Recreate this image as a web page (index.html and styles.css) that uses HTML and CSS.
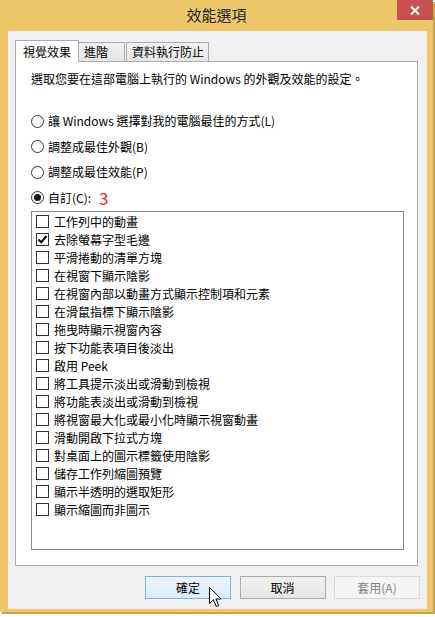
FILE: index.html
```html
<!DOCTYPE html>
<html>
<head>
<meta charset="utf-8">
<title>效能選項</title>
<link rel="stylesheet" href="styles.css">
</head>
<body>
<div class="window">
    <div class="titlebar">
        <span></span>
        <span class="title">效能選項</span>
        <span class="close"><svg width="10" height="9" viewBox="0 0 10 9"><path d="M1 0.5 L9 8.5 M9 0.5 L1 8.5" stroke="#fff" stroke-width="2"/></svg></span>
    </div>
    <div class="client">
        <div class="tabs">
            <div class="tab active">視覺效果</div>
            <div class="tab">進階</div>
            <div class="tab">資料執行防止</div>
        </div>
        <div class="panel">
            <p class="intro">選取您要在這部電腦上執行的 Windows 的外觀及效能的設定。</p>
            <div class="radios">
                <label class="radio"><span class="dot"></span>讓 Windows 選擇對我的電腦最佳的方式(L)</label>
                <label class="radio"><span class="dot"></span>調整成最佳外觀(B)</label>
                <label class="radio"><span class="dot"></span>調整成最佳效能(P)</label>
                <label class="radio"><span class="dot on"></span>自訂(C):<span class="mark">3</span></label>
            </div>
            <ul class="options">
                <li><span class="box"></span>工作列中的動畫</li>
                <li><span class="box"><svg width="11" height="11" viewBox="0 0 11 11"><path d="M1.5 5.5 L4.2 8.3 L9.5 2" fill="none" stroke="#000" stroke-width="2"/></svg></span>去除螢幕字型毛邊</li>
                <li><span class="box"></span>平滑捲動的清單方塊</li>
                <li><span class="box"></span>在視窗下顯示陰影</li>
                <li><span class="box"></span>在視窗內部以動畫方式顯示控制項和元素</li>
                <li><span class="box"></span>在滑鼠指標下顯示陰影</li>
                <li><span class="box"></span>拖曳時顯示視窗內容</li>
                <li><span class="box"></span>按下功能表項目後淡出</li>
                <li><span class="box"></span>啟用 Peek</li>
                <li><span class="box"></span>將工具提示淡出或滑動到檢視</li>
                <li><span class="box"></span>將功能表淡出或滑動到檢視</li>
                <li><span class="box"></span>將視窗最大化或最小化時顯示視窗動畫</li>
                <li><span class="box"></span>滑動開啟下拉式方塊</li>
                <li><span class="box"></span>對桌面上的圖示標籤使用陰影</li>
                <li><span class="box"></span>儲存工作列縮圖預覽</li>
                <li><span class="box"></span>顯示半透明的選取矩形</li>
                <li><span class="box"></span>顯示縮圖而非圖示</li>
            </ul>
        </div>
        <div class="buttons">
            <button class="btn default">確定</button>
            <button class="btn">取消</button>
            <button class="btn" disabled>套用(A)</button>
        </div>
    </div>
    <svg class="cursor" width="13" height="21" viewBox="0 0 13 21">
        <path d="M0.5 0.5 L0.5 16.5 L4.5 12.8 L7.2 19.5 L9.6 18.5 L7 12 L12.2 12 Z" fill="#fff" stroke="#000" stroke-width="1" stroke-linejoin="miter"/>
    </svg>
</div>
</body>
</html>
```

FILE: styles.css
```css
html,body{
    margin:0;
    height:100%;
    background:#ffffff;
}
body{
    font-family:"Noto Sans CJK TC", sans-serif;
    font-size:12px;
    color:#000;
}
button{
    font-family:inherit;
    font-size:inherit;
}

.window
{
    position:relative;
    width:433px;
    height:612px;
    background:#efc76b;
    display:flex;
    flex-direction:column;
    box-shadow:2px 2px 0 #c9a352;
}
.titlebar
{
    height:31px;
    display:grid;
    grid-template-columns:1fr auto 1fr;
    align-items:start;
}
.title
{
    font-size:15px;
    line-height:30px;
    color:#222;
}
.close
{
    justify-self:end;
    width:36px;
    height:20px;
    background:#c75050;
    display:flex;
    align-items:center;
    justify-content:center;
}

.client
{
    flex:1 1 auto;
    margin:0 6px 3px 8px;
    background:#f0f0f0;
    display:flex;
    flex-direction:column;
}
.tabs
{
    display:flex;
    align-items:flex-end;
    height:21px;
    margin:9px 0 0 7px;
    position:relative;
    z-index:1;
}
.tab
{
    height:19px;
    line-height:18px;
    padding:0 4px 0 5px;
    border:1px solid #acacac;
    border-bottom:none;
    box-sizing:border-box;
    background:linear-gradient(#f0f0f0, #e5e5e5);
    margin-left:-1px;
}
.tab + .tab + .tab
{
    margin-left:1px;
}
.tab.active
{
    height:22px;
    line-height:22px;
    margin:0 0 -1px 0;
    padding:0 7px 0 7px;
    background:#fff;
    position:relative;
    z-index:2;
}
.tab.active + .tab
{
    padding-right:16px;
}

.panel
{
    height:505px;
    box-sizing:border-box;
    margin:0 9px 0 7px;
    border:1px solid #acacac;
    background:#fff;
    padding:0 0 0 15px;
}
.intro
{
    margin:9px 0 0 0;
    line-height:16px;
}
.radios
{
    margin-top:26px;
    display:flex;
    flex-direction:column;
    gap:9.5px;
}
.radio
{
    display:flex;
    align-items:center;
    height:16px;
    line-height:16px;
}
.dot
{
    width:13px;
    height:13px;
    box-sizing:border-box;
    border:1px solid #333;
    border-radius:50%;
    background:#fff;
    margin-right:4px;
    display:flex;
    align-items:center;
    justify-content:center;
}
.dot.on::after
{
    content:"";
    width:7px;
    height:7px;
    border-radius:50%;
    background:#1a1a1a;
}
.mark
{
    color:#e52a22;
    font-size:17px;
    margin-left:8px;
    line-height:16px;
}

.options
{
    list-style:none;
    margin:5px 0 0 0;
    padding:1px 0 0 4px;
    width:373px;
    height:339px;
    box-sizing:border-box;
    border:1px solid #828790;
}
.options > li
{
    height:18px;
    display:flex;
    align-items:center;
    line-height:18px;
}
.box
{
    width:13px;
    height:13px;
    box-sizing:border-box;
    border:1px solid #333;
    background:#fff;
    margin-right:5px;
    display:flex;
    align-items:center;
    justify-content:center;
}

.buttons
{
    display:flex;
    justify-content:flex-end;
    gap:8.5px;
    margin:10px 7px 0 0;
}
.btn
{
    width:86px;
    height:23px;
    padding:0;
    border:1px solid #acacac;
    background:linear-gradient(#f0f0f0, #e5e5e5);
    color:#000;
    line-height:20px;
}
.btn.default
{
    border-color:#7eb4ea;
    background:linear-gradient(#ecf4fc, #dcecfc);
}
.btn:disabled
{
    border-color:#d9d9d9;
    background:#f4f4f4;
    color:#838383;
}

.cursor
{
    position:absolute;
    left:209px;
    top:587px;
}
```
